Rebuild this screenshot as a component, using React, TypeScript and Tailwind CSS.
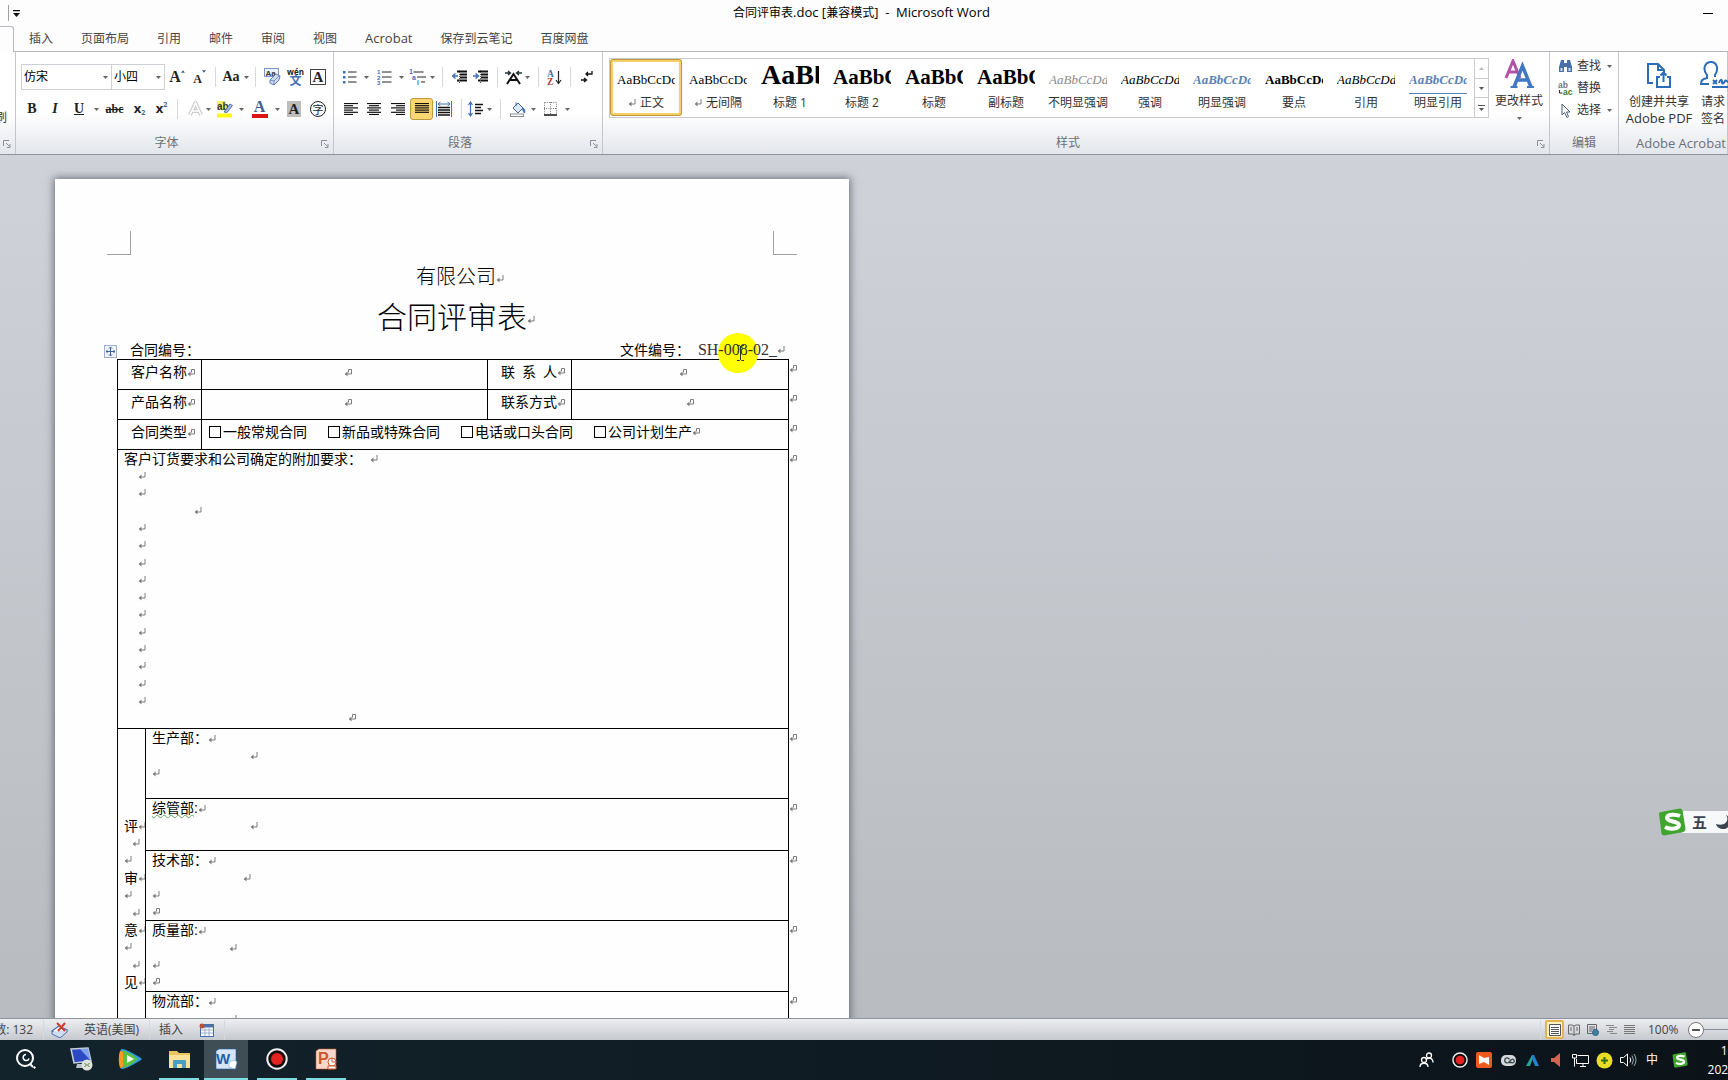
import React from "react";

const UI = "font-['Open_Sans','Noto_Sans_CJK_SC',sans-serif]";

function Caret({ className = "w-2.5" }: { className?: string }) {
  return (
    <button aria-label="更多选项" className={`flex h-6 shrink-0 items-center justify-center ${className}`}>
      <svg width="5" height="3" viewBox="0 0 5 3"><path d="M0 0h5L2.5 3z" fill="#666" /></svg>
    </button>
  );
}

function Tool({ label, className = "w-6", active, children }: { label: string; className?: string; active?: boolean; children: React.ReactNode }) {
  return (
    <button
      aria-label={label}
      className={`flex h-[22px] shrink-0 items-center justify-center ${className} ${active ? "rounded-[3px] border border-[#c29a3b] bg-[#fbd671]" : ""}`}
    >
      {children}
    </button>
  );
}

function Sep({ className = "w-2.5" }: { className?: string }) {
  return (
    <span className={`flex h-5 shrink-0 justify-center ${className}`}>
      <span className="w-px bg-[#d5d8dc]" />
    </span>
  );
}

function Launcher() {
  return (
    <button aria-label="打开对话框" className="absolute right-1 bottom-1.5">
      <svg width="8" height="8" viewBox="0 0 8 8" fill="none" stroke="#8b9098"><path d="M.5 6V.5H6M3 3l3.500 3.500M7 4v3.500H4" /></svg>
    </button>
  );
}

function Group({ title, launcher, className = "", titleClass = "pr-4", children }: { title: string; launcher?: boolean; className?: string; titleClass?: string; children: React.ReactNode }) {
  return (
    <section aria-label={title} className={`relative flex flex-col border-r border-[#c3c7cd] ${className}`}>
      <div className="h-[83px]">{children}</div>
      <div className={`text-center leading-4 whitespace-nowrap text-[#6b7077] ${titleClass}`}>{title}</div>
      {launcher && <Launcher />}
    </section>
  );
}

function Lines({ rows }: { rows: [number, number][] }) {
  return (
    <svg width="14" height="12" viewBox="0 0 14 12" stroke="#111">
      {rows.map(([a, b], i) => <path key={i} d={`M${a} ${i * 2.200 + 0.500}H${b}`} strokeWidth="1.200" />)}
    </svg>
  );
}

const serif = "font-['Liberation_Serif',serif]";

function FontGroup() {
  return (
    <Group title="字体" launcher className="w-[318px]">
      <div className="flex h-[42px] items-center pt-2 pl-[5px]">
        <div className="relative">
          <select aria-label="字体" className="h-[26px] w-[91px] appearance-none border border-[#cdd0d4] bg-white pl-0.5 text-black">
            <option>仿宋</option>
          </select>
          <span className="pointer-events-none absolute top-px right-0.5"><Caret /></span>
        </div>
        <div className="relative -ml-px">
          <select aria-label="字号" className="h-[26px] w-[54px] appearance-none border border-[#cdd0d4] bg-white pl-0.5 text-black">
            <option>小四</option>
          </select>
          <span className="pointer-events-none absolute top-px right-0.5"><Caret /></span>
        </div>
        <Tool label="增大字体">
          <span className={`${serif} text-[16px] font-bold`}>A</span>
          <svg className="-mt-3" width="4" height="3" viewBox="0 0 5 3"><path d="M0 3h5L2.500 0z" fill="#3b5f93" /></svg>
        </Tool>
        <Tool label="缩小字体" className="w-[21px]">
          <span className={`${serif} mt-1 text-xs font-bold`}>A</span>
          <svg className="-mt-3" width="4" height="3" viewBox="0 0 5 3"><path d="M0 0h5L2.500 3z" fill="#3b5f93" /></svg>
        </Tool>
        <Sep />
        <Tool label="更改大小写" className="w-[22px]"><span className={`${serif} text-[14px] font-bold`}>Aa</span></Tool>
        <Caret className="w-2" />
        <Sep />
        <Tool label="清除格式">
          <svg width="17" height="18" viewBox="0 0 17 18">
            <rect x=".5" y=".5" width="14" height="8" fill="#eef3fb" stroke="#7d9ac6" />
            <text x="1.500" y="7.500" fontSize="8" fontFamily="Liberation Sans" fontWeight="bold" fill="#333">Aa</text>
            <path d="M6 12l6-6 4 2-1 4-5 5-4-2z" fill="#cfdcf2" stroke="#5e7db3" /><path d="M6 12l4 1v4M10 13l5-5" fill="none" stroke="#5e7db3" strokeWidth=".8" />
          </svg>
        </Tool>
        <Tool label="拼音指南" className="w-[23px]">
          <span className="flex flex-col items-center">
            <span className="text-[8px] leading-[7px] font-bold text-[#222]">wén</span>
            <span className="text-[12px] leading-[12px] font-bold text-[#4a72b8]">文</span>
          </span>
        </Tool>
        <Tool label="字符边框" className="w-[22px]">
          <span className={`${serif} flex size-4 items-center justify-center border border-[#444] text-[15px] leading-none font-bold`}>A</span>
        </Tool>
      </div>
      <div className="flex h-[30px] items-center pl-[5px]">
        <Tool label="加粗" className="w-[22px]"><b className={`${serif} text-[14px]`}>B</b></Tool>
        <Tool label="倾斜"><i className={`${serif} text-[14px] font-bold`}>I</i></Tool>
        <Tool label="下划线"><span className={`${serif} text-[14px] font-bold underline`}>U</span></Tool>
        <Caret />
        <Tool label="删除线" className="w-[27px]"><s className={`${serif} text-[12px] font-bold`}>abc</s></Tool>
        <Tool label="下标" className="w-[23px]"><b className="text-[13px]">x</b><span className="mt-2 text-[7px] font-bold text-[#3b5f93]">2</span></Tool>
        <Tool label="上标" className="w-[21px]"><b className="text-[13px]">x</b><span className="-mt-2 text-[7px] font-bold text-[#3b5f93]">2</span></Tool>
        <Sep />
        <Tool label="文本效果" className="ml-1 w-[18px]">
          <svg width="15" height="16" viewBox="0 0 15 16"><path d="M2 14L7.500 2 13 14M4.500 10h6" fill="none" stroke="#cfcfcf" strokeWidth="4" /><path d="M2 14L7.500 2 13 14M4.500 10h6" fill="none" stroke="#fff" strokeWidth="1.500" /></svg>
        </Tool>
        <Caret className="w-2" />
        <Tool label="突出显示" className="w-[25px]">
          <svg width="16" height="17" viewBox="0 0 16 17">
            <rect x="0" y="0" width="9" height="9" fill="#f3ee62" />
            <text x="0" y="8.500" fontSize="10" fontFamily="Liberation Sans" fontWeight="bold" fill="#333">ab</text>
            <path d="M7 11l6-8 2.500 1.500L10 11.500z" fill="#9db9e2" stroke="#3b5f93" strokeWidth=".8" /><rect y="12.500" width="15" height="4" fill="#fdf913" />
          </svg>
        </Tool>
        <Caret className="w-[9px]" />
        <Tool label="字体颜色" className="w-[27px]">
          <span className={`${serif} flex h-[17px] w-4 items-center justify-center border-b-4 border-[#dc1414] text-[16px] leading-none font-bold text-[#3b5f93]`}>A</span>
        </Tool>
        <Caret className="w-2" />
        <Tool label="字符底纹" className="w-[26px]"><span className={`${serif} flex h-4 w-3.5 items-center justify-center bg-[#bdbdbd] text-[15px] leading-none font-bold`}>A</span></Tool>
        <Tool label="带圈字符" className="w-[22px]"><span className="flex size-4 items-center justify-center rounded-full border border-[#222] text-[11px] leading-none">字</span></Tool>
      </div>
    </Group>
  );
}

function IndentIcon({ flip }: { flip?: boolean }) {
  return (
    <svg width="16" height="14" viewBox="0 0 16 14" stroke="#111">
      <path d="M5 1.500h10M8 4.500h7M8 7.500h7M5 10.500h10" strokeWidth="1.800" />
      <path d="M7.500 0v14" strokeDasharray="1 1" stroke="#555" />
      <path d={flip ? "M0 6h4M2.500 3.500L5.500 6l-3 2.500" : "M6 6H2M3.500 3.500L.5 6l3 2.500"} fill="none" stroke="#3f6fb0" strokeWidth="1.500" />
    </svg>
  );
}

function ParagraphGroup() {
  return (
    <Group title="段落" launcher className="w-[269px]">
      <div className="flex h-[42px] items-center pt-2 pl-[5px]">
        <Tool label="项目符号" className="w-[22px]">
          <svg width="14" height="14" viewBox="0 0 14 14"><path d="M5 2h8.500M5 7h8.500M5 12h8.500" stroke="#222" /><path d="M0 1h2.500v2.500H0zM0 6h2.500v2.500H0zM0 11h2.500v2.500H0z" fill="#3f6fb0" /></svg>
        </Tool>
        <Caret />
        <Tool label="编号" className="w-[26px]">
          <svg width="15" height="16" viewBox="0 0 15 16"><path d="M5 3h9.500M5 8h9.500M5 13h9.500" stroke="#222" /><g fontSize="6" fontFamily="Liberation Sans" fontWeight="bold" fill="#3f6fb0"><text x="0" y="5">1</text><text x="0" y="10.500">2</text><text x="0" y="16">3</text></g></svg>
        </Tool>
        <Caret className="w-[9px]" />
        <Tool label="多级列表" className="w-[22px]">
          <svg width="17" height="17" viewBox="0 0 17 17"><path d="M4.500 3h10M8 8h9M12 13h4" stroke="#222" /><g fontSize="7" fontFamily="Liberation Sans" fontWeight="bold" fill="#3f6fb0"><text x="0" y="5">1</text><text x="3" y="10.500">a</text><text x="8" y="16">i</text></g></svg>
        </Tool>
        <Caret className="w-2" />
        <Sep className="w-3" />
        <Tool label="减少缩进" className="w-[23px]"><IndentIcon /></Tool>
        <Tool label="增加缩进" className="w-5"><IndentIcon flip /></Tool>
        <Sep className="w-3" />
        <Tool label="中文版式" className="w-5">
          <svg width="17" height="15" viewBox="0 0 17 15" fill="none" stroke="#111"><path d="M2 14L8.500 4 15 14M5 10h7" strokeWidth="2" /><path d="M0 3h5M3 1l2.500 2L3 5M17 3h-5M14 1l-2.500 2L14 5" stroke="#233" strokeWidth="1.300" /></svg>
        </Tool>
        <Caret className="w-[9px]" />
        <Sep className="w-3" />
        <Tool label="排序" className="w-5">
          <svg width="15" height="17" viewBox="0 0 15 17"><g fontSize="9.500" fontFamily="Liberation Serif" fontWeight="bold"><text x="0" y="7.500" fill="#3f6fb0">A</text><text x="0" y="16" fill="#a3423f">Z</text></g><path d="M11.500 2v12M9 11l2.500 3.500L14 11" fill="none" stroke="#222" strokeWidth="1.200" /></svg>
        </Tool>
        <Sep className="w-3" />
        <Tool label="显示编辑标记" className="w-[22px]">
          <svg width="12" height="12" viewBox="0 0 12 12" fill="none" stroke="#111" strokeWidth="1.300"><path d="M11 0v3H5M7 1L5 3l2 2M0 9h5M3 7l2.500 2L3 11" /></svg>
        </Tool>
      </div>
      <div className="flex h-[30px] items-center pl-[5px]">
        <Tool label="左对齐" className="w-[23px]"><Lines rows={[[0, 14], [0, 9], [0, 14], [0, 9], [0, 14], [0, 9]]} /></Tool>
        <Tool label="居中"><Lines rows={[[0, 14], [2, 12], [0, 14], [2, 12], [0, 14], [2, 12]]} /></Tool>
        <Tool label="右对齐" className="w-6"><Lines rows={[[0, 14], [5, 14], [0, 14], [5, 14], [0, 14], [5, 14]]} /></Tool>
        <Tool label="两端对齐" className="w-[23px]" active><Lines rows={[[0, 14], [0, 14], [0, 14], [0, 14], [0, 14]]} /></Tool>
        <Tool label="分散对齐" className="w-[22px]">
          <svg width="16" height="16" viewBox="0 0 16 16" fill="none" stroke="#111"><path d="M2 6.500h12M2 9h12M2 11.500h12M2 14h12" strokeWidth="1.300" /><path d="M.5 0v16M15.500 0v16M2 3h12M4.500 1L2 3l2.500 2M11.500 1L14 3l-2.500 2" stroke="#3f6fb0" /></svg>
        </Tool>
        <Sep className="w-3" />
        <Tool label="行距" className="w-[18px]">
          <svg width="16" height="16" viewBox="0 0 16 16" fill="none"><path d="M7 3.500h8M7 6.500h6M7 9.500h8M7 12.500h6" stroke="#111" strokeWidth="1.300" /><path d="M2.500 1v14M.5 4l2-3 2 3M.5 12l2 3 2-3" stroke="#3f6fb0" strokeWidth="1.200" /></svg>
        </Tool>
        <Caret className="w-2" />
        <Sep className="w-3.5" />
        <Tool label="底纹" className="w-[22px]">
          <svg width="16" height="16" viewBox="0 0 16 16"><path d="M3 7l5-5 5 5-5 5z" fill="#dbe6f6" stroke="#3f5f8f" /><path d="M6 5V1.500M13 7c2 1 2 3 1.500 5-1-1-2-2-1.500-5z" stroke="#3f6fb0" fill="#3f6fb0" /><rect x=".5" y="13" width="13" height="2.500" fill="#fff" stroke="#8b9098" /></svg>
        </Tool>
        <Caret className="w-2" />
        <Tool label="边框" className="w-[26px]">
          <svg width="13" height="14" viewBox="0 0 13 14" fill="none" stroke="#777"><path d="M.5.5h12v12M.5.500v12M6.500 0v12M0 6.500h13" strokeDasharray="1 1.200" /><path d="M0 13h13" stroke="#111" strokeWidth="1.500" /></svg>
        </Tool>
        <Caret className="w-2" />
      </div>
    </Group>
  );
}

const STYLES = [
  { name: "正文", mark: true, look: "text-black", on: true },
  { name: "无间隔", mark: true, look: "text-black" },
  { name: "标题 1", look: "text-[28px] font-bold text-black" },
  { name: "标题 2", look: "text-[21px] font-bold text-black" },
  { name: "标题", look: "text-[21px] font-bold text-black" },
  { name: "副标题", look: "text-[21px] font-bold text-black" },
  { name: "不明显强调", look: "italic text-[#8c8c8c]" },
  { name: "强调", look: "italic text-black" },
  { name: "明显强调", look: "italic font-bold text-[#5b82b5]" },
  { name: "要点", look: "font-bold text-black" },
  { name: "引用", look: "italic text-black" },
  { name: "明显引用", look: "italic font-bold text-[#5b82b5]", line: true },
];

function StylesGroup() {
  return (
    <Group title="样式" launcher className="min-w-0 flex-1">
      <div className="flex pl-1.5">
        <div className="mt-1.5 flex h-[60px] min-w-0 border border-[#c8cbd0] bg-white">
          {STYLES.map((s) => (
            <button key={s.name} className={`flex h-[57px] w-[72px] shrink-0 flex-col items-center border-[3px] ${s.on ? "rounded-[3px] border-[#f3cf66] outline -outline-offset-1 outline-[#c0993c]" : "border-transparent"} pt-1`}>
              <span className={`h-7 w-[58px] overflow-hidden text-left text-[13px] leading-7 whitespace-nowrap ${serif} ${s.line ? "border-b border-[#5b82b5]" : ""}`}>
                <span className={`leading-0 ${s.look}`}>AaBbCcDd</span>
              </span>
              <span className="mt-px flex items-center gap-1 leading-4 whitespace-nowrap text-[#333]">
                {s.mark && <Ret />}{s.name}
              </span>
            </button>
          ))}
          <div className="flex w-3.5 shrink-0 flex-col border-l border-[#c8cbd0]">
            <button aria-label="上一行" className="flex flex-1 items-center justify-center"><svg width="5" height="3" viewBox="0 0 5 3"><path d="M0 3h5L2.500 0z" fill="#bbb" /></svg></button>
            <button aria-label="下一行" className="flex flex-1 items-center justify-center border-y border-[#c8cbd0]"><svg width="5" height="3" viewBox="0 0 5 3"><path d="M0 0h5L2.500 3z" fill="#555" /></svg></button>
            <button aria-label="其他" className="flex flex-1 items-center justify-center"><svg width="7" height="6" viewBox="0 0 7 6"><path d="M0 .5h7" stroke="#555" /><path d="M1 3h5L3.500 6z" fill="#555" /></svg></button>
          </div>
        </div>
        <button className="flex w-[60px] shrink-0 flex-col items-center pt-[7px]">
          <svg width="30" height="30" viewBox="0 0 30 30" fill="none">
            <path d="M2 19L9 2l7 17M4.500 13h9" stroke="#b253a8" strokeWidth="3" />
            <path d="M10 28L18.500 7 27 28M13 21h11" stroke="#4277c4" strokeWidth="3.500" /><path d="M6.500 28h7M23 28h7" stroke="#4277c4" strokeWidth="2" />
          </svg>
          <span className="mt-1 leading-4 whitespace-nowrap text-[#333]">更改样式</span>
          <svg className="mt-2" width="5" height="3" viewBox="0 0 5 3"><path d="M0 0h5L2.500 3z" fill="#666" /></svg>
        </button>
      </div>
    </Group>
  );
}

function Ribbon() {
  return (
    <div className="flex h-[103px] shrink-0 overflow-hidden border-b border-[#8f959d] bg-linear-to-b from-white from-60% to-[#e3e6ec]">
      <section aria-label="剪贴板" className="relative w-4 shrink-0 border-r border-[#c3c7cd]">
        <button className="absolute top-14 right-2 leading-5 whitespace-nowrap text-[#333]">格式刷</button>
        <Launcher />
      </section>
      <FontGroup />
      <ParagraphGroup />
      <StylesGroup />
      <Group title="编辑" className="w-[69px]" titleClass="">
        <div className="flex flex-col pt-[3px] pl-2 text-[#333]">
          <button className="flex h-[22px] items-center gap-1">
            <svg width="15" height="14" viewBox="0 0 15 14"><path d="M3 1h3v3h3V1h3l2 7v5H9V8H6v5H1V8z" fill="#4a6fa8" /><path d="M2.500 9h2v3h-2zM10.500 9h2v3h-2z" fill="#cfe0f5" /></svg>
            查找<svg className="ml-0.5" width="5" height="3" viewBox="0 0 5 3"><path d="M0 0h5L2.500 3z" fill="#666" /></svg>
          </button>
          <button className="flex h-[22px] items-center gap-1">
            <svg width="15" height="15" viewBox="0 0 15 15"><g fontSize="8.500" fontFamily="Liberation Sans" fontWeight="bold"><text x="0" y="7" fill="#777">ab</text><text x="5" y="14" fill="#2f7d32">ac</text></g><path d="M1.500 9v3h3" fill="none" stroke="#333" /></svg>
            替换
          </button>
          <button className="flex h-[22px] items-center gap-1">
            <svg width="15" height="15" viewBox="0 0 15 15"><path d="M4 1v11l2.500-2.500L9 14.500l1.500-1-2-4.500H12z" fill="#fff" stroke="#4c5f7d" /></svg>
            选择<svg className="ml-0.5" width="5" height="3" viewBox="0 0 5 3"><path d="M0 0h5L2.500 3z" fill="#666" /></svg>
          </button>
        </div>
      </Group>
      <Group title="Adobe Acrobat" className="w-[109px]" titleClass="pl-4 text-[13px]">
        <div className="flex pt-[9px] text-[#333]">
          <button className="flex w-20 shrink-0 flex-col items-center leading-[17px] whitespace-nowrap">
            <svg className="mb-1" width="26" height="28" viewBox="0 0 26 28" fill="none" stroke="#2b6cb8" strokeWidth="2"><path d="M7 22H2V3h10l6 6v3M12 3v6h6M14 16h-3v10h13V16h-3M17.500 21v-9M14.500 14.500l3-3 3 3" /></svg>
            <span>创建并共享</span><span className="text-[13px]">Adobe PDF</span>
          </button>
          <button className="flex w-7 shrink-0 flex-col items-center leading-[17px] whitespace-nowrap">
            <svg className="mb-1 ml-1" width="32" height="28" viewBox="0 0 32 28" fill="none" stroke="#2b6cb8" strokeWidth="2"><path d="M10 23H2c0-4 2-5 6-6v-3C3 8 6 1 12 1s8 7 4 13v2M14 19l4 4M18 19l-4 4M20 22c1-4 3-4 3-1s2 1 3-1 2 2 5 1M13 26h18" /></svg>
            <span>请求</span><span>签名</span>
          </button>
        </div>
      </Group>
    </div>
  );
}

function Ret({ cell, className = "" }: { cell?: boolean; className?: string }) {
  return (
    <svg className={`inline-block shrink-0 align-middle ${className}`} width="8" height="8" viewBox="0 0 8 8" fill="none" stroke="#7d7d7d">
      {cell ? <path d="M4.500 3.500V.5h3v4.500H1" /> : <path d="M7 0v5H1" />}
      <path d="M3.500 2.500L.8 5l2.700 2.500z" fill="#7d7d7d" stroke="none" />
    </svg>
  );
}

function Kind({ text }: { text: string }) {
  return (
    <label className="flex items-center gap-0.5">
      <input type="checkbox" className="size-3 appearance-none border border-black" />
      {text}
    </label>
  );
}

function EndMark() {
  return <td className="border-0 pt-0.5 align-top leading-3"><Ret cell /></td>;
}

const B = "border border-black p-0 align-top";

const DEMAND_LINES = ["pl-3.5", "pl-3.5", "pl-[70px]", ...Array(11).fill("pl-3.5"), "pl-56"];

const SIDE_LINES = [
  { t: "评" }, { p: "pl-2" }, { p: "" }, { t: "审" }, { p: "" }, { p: "pl-2" }, { t: "意" }, { p: "" }, { p: "pl-2" }, { t: "见" },
];

const DEPTS = [
  { name: "生产部：", h: "h-[70px]", marks: ["pl-[98px]", "pl-0"] },
  { name: "综管部", colon: ":", wavy: true, h: "h-[52px]", marks: ["pl-[98px]"] },
  { name: "技术部：", h: "h-[70px]", marks: ["pl-[91px]", "pl-0", "pl-0"] },
  { name: "质量部", colon: ":", h: "h-[71px]", marks: ["pl-[77px]", "pl-0", "pl-0"] },
  { name: "物流部：", h: "h-[70px]", marks: ["pl-[77px]", "pl-0"] },
];

function ContractTable() {
  return (
    <table className="w-[684px] table-fixed border-collapse">
      <colgroup>
        <col className="w-7" /><col className="w-14" /><col className="w-[286px]" /><col className="w-[84px]" /><col className="w-[217px]" /><col className="w-[13px]" />
      </colgroup>
      <tbody className="leading-6">
        <tr className="h-[30px]">
          <td colSpan={2} className={`${B} pl-[13px] whitespace-nowrap`}>客户名称<Ret cell /></td>
          <td className={`${B} pl-1.5 text-center`}><Ret cell /></td>
          <td className={`${B} pl-[13px] whitespace-nowrap`}>
            <span className="flex items-center"><span className="flex w-14 justify-between"><span>联</span><span>系</span><span>人</span></span><Ret cell /></span>
          </td>
          <td className={`${B} pl-1.5 text-center`}><Ret cell /></td>
          <EndMark />
        </tr>
        <tr className="h-[30px]">
          <td colSpan={2} className={`${B} pl-[13px] whitespace-nowrap`}>产品名称<Ret cell /></td>
          <td className={`${B} pl-1.5 text-center`}><Ret cell /></td>
          <td className={`${B} pl-[13px] whitespace-nowrap`}>联系方式<Ret cell /></td>
          <td className={`${B} pl-5 text-center`}><Ret cell /></td>
          <EndMark />
        </tr>
        <tr className="h-[30px]">
          <td colSpan={2} className={`${B} pl-[13px] whitespace-nowrap`}>合同类型<Ret cell /></td>
          <td colSpan={3} className={`${B} pl-[7px]`}>
            <div className="flex items-center gap-[21px]">
              <Kind text="一般常规合同" /><Kind text="新品或特殊合同" /><Kind text="电话或口头合同" />
              <span className="flex items-center"><Kind text="公司计划生产" /><Ret cell /></span>
            </div>
          </td>
          <EndMark />
        </tr>
        <tr className="h-[279px]">
          <td colSpan={5} className={`${B} pl-1.5 leading-4`}>
            <div className="grid h-[277px] auto-rows-fr">
              <p className="flex items-center gap-2">客户订货要求和公司确定的附加要求：<Ret /></p>
              {DEMAND_LINES.map((p, i) => (
                <p key={i} className={`flex items-center ${p}`}><Ret cell={i === 14} /></p>
              ))}
            </div>
          </td>
          <EndMark />
        </tr>
        {DEPTS.map((d, i) => (
          <tr key={d.name} className={d.h}>
            {i === 0 && (
              <td rowSpan={5} className={`${B} pt-[88px] leading-4`}>
                <div className="grid h-[174px] auto-rows-fr overflow-hidden pl-1.5">
                  {SIDE_LINES.map((l, k) => (
                    <p key={k} className={`flex items-center ${l.p ?? ""}`}>{l.t}<Ret /></p>
                  ))}
                </div>
              </td>
            )}
            <td colSpan={4} className={`${B} pt-px pl-1.5 leading-[17px]`}>
              <p className="flex h-[17px] items-center">
                <span className={d.wavy ? "underline decoration-[#5fa463] decoration-wavy decoration-1 underline-offset-1" : ""}>{d.name}</span>{d.colon}<Ret />
              </p>
              {d.marks.map((m, k) => (
                <p key={k} className={`flex h-[17px] items-center ${m}`}><Ret cell={k === 2} /></p>
              ))}
            </td>
            <EndMark />
          </tr>
        ))}
      </tbody>
    </table>
  );
}

function Page() {
  return (
    <article className="relative mt-6 ml-[55px] w-[794px] shrink-0 bg-[#fefefe] pt-[52px] text-sm text-black shadow-[0_0_8px_1px_rgba(70,75,85,0.75)] font-['Liberation_Sans','Noto_Sans_CJK_SC',sans-serif]">
      <div className="flex justify-between px-[52px]">
        <span className="size-6 border-r border-b border-[#a0a0a0]" />
        <span className="size-6 border-b border-l border-[#a0a0a0]" />
      </div>
      <h2 className="mt-2 pl-4 text-center text-[20px] leading-7 font-light">有限公司<Ret /></h2>
      <h1 className="mt-1 pl-2 text-center text-[30px] leading-[46px] font-light">合同评审表<Ret /></h1>
      <div className="relative mb-px flex h-[17px] items-center justify-between pr-[64px] pl-[75px] leading-4">
        <span>合同编号：</span>
        <span className="flex items-center">
          <span className="absolute -top-2 left-[663px] size-10 rounded-full bg-[#ffff00]" />
          <span className="relative">文件编号：</span>
          <span className={`relative pl-2 text-[16px] text-[#333] ${serif}`}>SH-008-02_</span>
          <Ret />
        </span>
        <svg className="absolute top-1 left-[681px] z-10" width="9" height="16" viewBox="0 0 9 16" fill="none" stroke="#333"><path d="M1 .5h2.500l1 1 1-1H8M4.500 1v14M1 15.500h2.500l1-1 1 1H8" /></svg>
        <button aria-label="移动表格" className="absolute top-1 left-[49px] flex size-[13px] items-center justify-center border border-[#9fb0cc] bg-[#eef3fb]">
          <svg width="9" height="9" viewBox="0 0 9 9" fill="none" stroke="#3a64a0"><path d="M4.500 0v9M0 4.500h9M3 1.500L4.500 0 6 1.500M3 7.500L4.500 9 6 7.500M1.500 3L0 4.500 1.500 6M7.500 3L9 4.500 7.500 6" /></svg>
        </button>
      </div>
      <div className="pl-[62px]"><ContractTable /></div>
    </article>
  );
}

function SogouS({ size }: { size: number }) {
  return (
    <svg width={size} height={size} viewBox="0 0 28 28">
      <path d="M1 6Q1 4 3 4L22 .500q2 0 2.500 2L27.500 21q0 2-2 3L6 27.500q-2 0-2.500-2z" fill="#3fa52e" />
      <path d="M22 8c-4-2-13-2-13 2s12 3 12 7-9 5-14 2" fill="none" stroke="#fff" strokeWidth="4" />
    </svg>
  );
}

function ImeBar() {
  return (
    <div className="absolute right-0 bottom-[182px] flex h-7 w-[70px] items-center overflow-hidden">
      <span className="relative z-10 shrink-0"><SogouS size={28} /></span>
      <div className="-ml-1 flex h-[22px] shrink-0 items-center gap-2 bg-[#f7f8fa] pr-2 pl-2.5 text-[#3b4350]">
        <span className="text-[15px] font-bold">五</span>
        <svg width="16" height="16" viewBox="0 0 16 16"><path d="M11 1c4 5-1 12-10 9 2 7 14 7 14-2 0-4-2-6-4-7z" fill="#3b4350" /></svg>
      </div>
    </div>
  );
}

function StatusBar() {
  return (
    <footer className="flex h-[22px] shrink-0 items-center border-t border-[#8f949b] bg-linear-to-b from-[#eceef1] to-[#c6c9cf] text-[#444]">
      <span className="flex w-[33px] justify-end overflow-hidden whitespace-nowrap"><span>字数: 132</span></span>
      <Sep className="w-5" />
      <button aria-label="校对" className="-ml-0.5">
        <svg width="17" height="16" viewBox="0 0 17 16"><path d="M1 9l7-5 8 4-7 6z" fill="#fff" stroke="#4a72b0" strokeWidth="1.300" /><path d="M1 10v2l8 4 7-6V8" fill="#cfdcf0" stroke="#4a72b0" /><path d="M6 1l8 8M14 1L7 9" stroke="#cf3a2e" strokeWidth="2" /></svg>
      </button>
      <button className="ml-4 whitespace-nowrap">英语(美国)</button>
      <Sep className="w-5" />
      <button className="whitespace-nowrap">插入</button>
      <button aria-label="宏" className="ml-4">
        <svg width="15" height="14" viewBox="0 0 15 14"><rect x="1.500" y="1.500" width="13" height="12" fill="#fff" stroke="#4a6fa8" /><path d="M2 3h12" stroke="#4a72b0" strokeWidth="3" /><path d="M2 7h12M2 10h12M6 4v9M10 4v9" stroke="#9fb0cc" /><circle cx="3" cy="3" r="2.500" fill="#b9503c" /></svg>
      </button>
      <Sep className="w-5" />
      <div className="ml-auto flex items-center">
        <Sep />
        <button aria-label="页面视图" className="flex size-[19px] items-center justify-center rounded-xs border-2 border-[#e3b552] bg-[#fdf1c4]"><svg width="12" height="12" viewBox="0 0 12 12" stroke="#555"><path d="M.5.500h11v11H.5z" fill="#fff" /><path d="M2 3.500h8M2 5.500h8M2 7.500h8M2 9.500h8" /></svg></button>
        <button aria-label="阅读版式视图" className="flex w-5 justify-center"><svg width="12" height="12" viewBox="0 0 12 12" fill="none" stroke="#666"><path d="M6 2v10M.5 1H4l2 1 2-1h3.500v9H8l-2 1-2-1H.5zM2 4h2M2 6h2M8 4h2M8 6h2" /></svg></button>
        <button aria-label="Web 版式视图" className="flex w-[17px] justify-center"><svg width="12" height="12" viewBox="0 0 12 12" fill="none" stroke="#666"><path d="M.5.500h9v9h-9zM2 3h6M2 5h6M2 7h3" /><circle cx="8.500" cy="8.500" r="3" fill="#3f7f9f" stroke="#2b5f86" /></svg></button>
        <button aria-label="大纲视图" className="flex w-5 justify-center"><svg width="11" height="11" viewBox="0 0 11 11" stroke="#888"><path d="M0 1.500h8M3 3.500h8M3 5.500h5M1 7.500h6M4 9.500h7" /></svg></button>
        <button aria-label="草稿" className="flex w-[17px] justify-center"><svg width="11" height="11" viewBox="0 0 11 11" stroke="#777"><path d="M0 1.500h11M0 3.500h11M0 5.500h11M0 7.500h11M0 9.500h11" /></svg></button>
        <button className="ml-2.5 w-9 text-left">100%</button>
        <button aria-label="缩小" className="ml-1 flex size-4 items-center justify-center rounded-full border border-[#777] bg-white"><span className="h-0.5 w-2 bg-[#555]" /></button>
        <span className="h-px w-6 bg-[#8b9098]" />
      </div>
    </footer>
  );
}

function TaskButton({ label, className, on, open, children }: { label: string; className: string; on?: boolean; open?: boolean; children: React.ReactNode }) {
  return (
    <button aria-label={label} className={`flex h-full items-center justify-center border-b-2 ${className} ${on ? "bg-[#3f4d55]" : ""} ${open ? "border-[#7fdbe4]" : "border-transparent"}`}>
      {children}
    </button>
  );
}

function OfficeIcon({ letter, word }: { letter: string; word?: boolean }) {
  const c = word ? "#1f5fa8" : "#d2552b";
  return (
    <svg width="23" height="22" viewBox="0 0 23 22">
      <path d="M1 3l3-2h17v19l-3 1H1z" fill={word ? "#d7e6f6" : "#f6d9cb"} stroke={c} strokeWidth=".6" />
      <text x={word ? 1 : 3} y="15.500" fontSize={word ? 15 : 16} fontWeight="bold" fontFamily="Liberation Sans" fill={c}>{letter}</text>
      {word ? <path d="M14 14l5-2 3 2-2 7-6-2z" fill="#fff" stroke="#8fb2dc" strokeWidth=".7" /> : <><circle cx="17" cy="14" r="4" fill="#fff" stroke={c} /><path d="M17 14v-4M17 14h4M13 18h8v3h-8z" stroke={c} fill="#fff" /></>}
    </svg>
  );
}

function RecIcon({ size }: { size: number }) {
  return <svg width={size} height={size} viewBox="0 0 22 22"><circle cx="11" cy="11" r="9.700" fill="#180c0c" stroke="#efefef" strokeWidth="2" /><circle cx="11" cy="11" r="6" fill="#e32222" /></svg>;
}

function Tray({ label, children }: { label: string; children: React.ReactNode }) {
  return <button aria-label={label} className="flex w-6 shrink-0 items-center justify-center">{children}</button>;
}

function TaskBar() {
  return (
    <nav aria-label="任务栏" className="flex h-10 shrink-0 items-center overflow-hidden bg-linear-to-r from-[#13232c] to-[#0b1319] text-white">
      <TaskButton label="搜索" className="w-[52px]">
        <svg width="20" height="20" viewBox="0 0 20 20" fill="none" stroke="#fff" strokeWidth="2"><circle cx="9" cy="9" r="8" /><path d="M14 15l3 3" /><path d="M10 5.500a3 3 0 1 0 3 4" strokeWidth="1.500" /><circle cx="18.500" cy="18.500" r=".8" fill="#fff" strokeWidth="1" /></svg>
      </TaskButton>
      <TaskButton label="远程桌面" className="ml-[7px] w-11">
        <svg width="24" height="24" viewBox="0 0 24 24"><path d="M2 2l17-1 3 13-17 2z" fill="#2c49c4" stroke="#c5cfdd" strokeWidth="1.500" /><path d="M11 2l8-.5 2.500 12z" fill="#7ea2ee" /><path d="M8 17h9l3 4H7z" fill="#b9c2cd" /><circle cx="18" cy="18" r="5.500" fill="#dfe5da" /><path d="M15.500 16l2 2-2 2M20.500 16l-2 2 2 2" fill="none" stroke="#557046" /></svg>
      </TaskButton>
      <TaskButton label="视频" className="ml-[5px] w-11">
        <svg width="25" height="22" viewBox="0 0 25 22"><path d="M3 1q4-1 20 9 1 1 0 2Q7 22 3 21-1 11 3 1z" fill="#2c9be6" /><path d="M2 3q5 0 15 8Q8 19 2 20-.5 11 2 3z" fill="#f39a1f" /><path d="M5 2q8 3 15 9-7 7-15 9z" fill="#5cc140" /><path d="M9 7l7 4-7 4z" fill="#fff" /></svg>
      </TaskButton>
      <TaskButton label="文件资源管理器" className="ml-[7px] w-10" open>
        <svg width="23" height="19" viewBox="0 0 23 19"><path d="M1 1h8l2 2h11v15H1z" fill="#e8c55f" /><path d="M1 5h21v13H1z" fill="#fbe29a" /><path d="M5 18v-7q0-1 1-1h11q1 0 1 1v7h-4v-4H9v4z" fill="#4a9fc4" /></svg>
      </TaskButton>
      <TaskButton label="Word" className="ml-[5px] w-11" on open><OfficeIcon letter="W" word /></TaskButton>
      <TaskButton label="录屏" className="ml-[9px] w-10" open><RecIcon size={22} /></TaskButton>
      <TaskButton label="PowerPoint" className="ml-[9px] w-10" open><OfficeIcon letter="P" /></TaskButton>
      <div className="ml-auto flex shrink-0 items-center">
        <button aria-label="人脉" className="mr-2 flex w-7 items-center justify-center"><svg width="15" height="16" viewBox="0 0 15 16" fill="none" stroke="#fff" strokeWidth="1.300"><circle cx="10" cy="3.500" r="2.500" /><circle cx="5" cy="8" r="2.500" /><path d="M1 15c0-5 8-5 8 0M7 7.500c3-3 7-1 7 3" /></svg></button>
        <Tray label="录屏托盘"><RecIcon size={16} /></Tray>
        <Tray label="助手"><svg width="16" height="16" viewBox="0 0 16 16"><rect width="16" height="16" rx="2" fill="#ee5a1c" /><path d="M3 3l5 3 5-1v8L8 10l-5 2z" fill="#fff" /></svg></Tray>
        <Tray label="Creative Cloud"><svg width="15" height="11" viewBox="0 0 15 11"><rect width="15" height="11" rx="5" fill="#d6d9db" /><path d="M8.500 4.500a2.500 2.500 0 1 0-1 3l3-3a1.800 1.800 0 1 1 0 3H8" fill="none" stroke="#38434a" strokeWidth="1.300" /></svg></Tray>
        <Tray label="Autodesk"><svg width="13" height="13" viewBox="0 0 13 13"><path d="M0 12L6 1h2L4 12z" fill="#2ba09b" /><path d="M6 1h2l5 11H9L6.500 6z" fill="#2a7fd4" /></svg></Tray>
        <Tray label="扬声器"><svg width="10" height="14" viewBox="0 0 10 14"><path d="M0 5h3l6-5v14L3 9H0z" fill="#d4624f" /></svg></Tray>
        <Tray label="网络"><svg width="17" height="15" viewBox="0 0 17 15" fill="none" stroke="#fff"><path d="M5.500 2.500h11v8H4.500V6M8 13.500h6M11 11v3M.5 1.500h4V5h-4zM2.500 5v8.500" /></svg></Tray>
        <Tray label="安全卫士"><svg width="17" height="17" viewBox="0 0 17 17"><circle cx="8.500" cy="8.500" r="8" fill="#e9de25" /><path d="M1 11a8 8 0 0 0 13 3.500A8 8 0 0 1 1 11z" fill="#4aa23a" /><path d="M8.500 5v7M5 8.500h7" stroke="#2f6f23" strokeWidth="2" /></svg></Tray>
        <Tray label="音量"><svg width="17" height="14" viewBox="0 0 17 14" fill="none" stroke="#fff"><path d="M.5 4.500h3l4-3.500v12l-4-3.500h-3zM10 4.500q1.500 2.500 0 5" /><path d="M12 2.500q3 4.500 0 9M14 1q4 6 0 12" stroke="#9aa" /></svg></Tray>
        <Tray label="输入法"><span className="text-xs">中</span></Tray>
        <span className="ml-1"><Tray label="搜狗输入法"><SogouS size={16} /></Tray></span>
        <div className="ml-3 w-6 shrink-0 overflow-hidden">
          <div className="w-16 text-center leading-[19px]">16:00<br />2022/1/10</div>
        </div>
      </div>
    </nav>
  );
}

const TABS = ["插入", "页面布局", "引用", "邮件", "审阅", "视图", "Acrobat", "保存到云笔记", "百度网盘"];

export default function App() {
  return (
    <div className={`flex h-screen flex-col overflow-hidden bg-[#fdfdfe] text-xs text-[#222] ${UI}`}>
      <header className="flex h-[26px] shrink-0 items-center justify-between">
        <button aria-label="自定义快速访问工具栏" className="ml-2 flex h-4 w-3 items-center justify-end border-l border-[#a0a0a0]">
          <svg width="7" height="7" viewBox="0 0 7 7"><path d="M0 .5h7" stroke="#111" strokeWidth="1.500" /><path d="M0 3h7L3.500 7z" fill="#111" /></svg>
        </button>
        <h1 className="whitespace-pre text-black">合同评审表<span className="text-[13px]">.doc [</span>兼容模式<span className="text-[13px]">]  -  Microsoft Word</span></h1>
        <button aria-label="最小化" className="mr-[15px] h-px w-2.5 bg-black" />
      </header>
      <div role="tablist" className="flex h-[26px] shrink-0">
        <button role="tab" aria-label="开始" aria-selected className="h-full w-3.5 rounded-tr-[3px] border-t border-r border-[#b5b8bc]" />
        <div className="flex flex-1 items-center gap-7 border-b border-[#b5b8bc] pl-[15px] text-[#444]">
          {TABS.map((t) => <button key={t} role="tab" className={`whitespace-nowrap ${t === "Acrobat" ? "text-[13px]" : ""}`}>{t}</button>)}
        </div>
      </div>
      <Ribbon />
      <main className="relative flex min-h-0 flex-1 items-start overflow-hidden bg-linear-to-b from-[#cfd2d8] to-[#b8bbc0]">
        <Page />
        <ImeBar />
      </main>
      <StatusBar />
      <TaskBar />
    </div>
  );
}
